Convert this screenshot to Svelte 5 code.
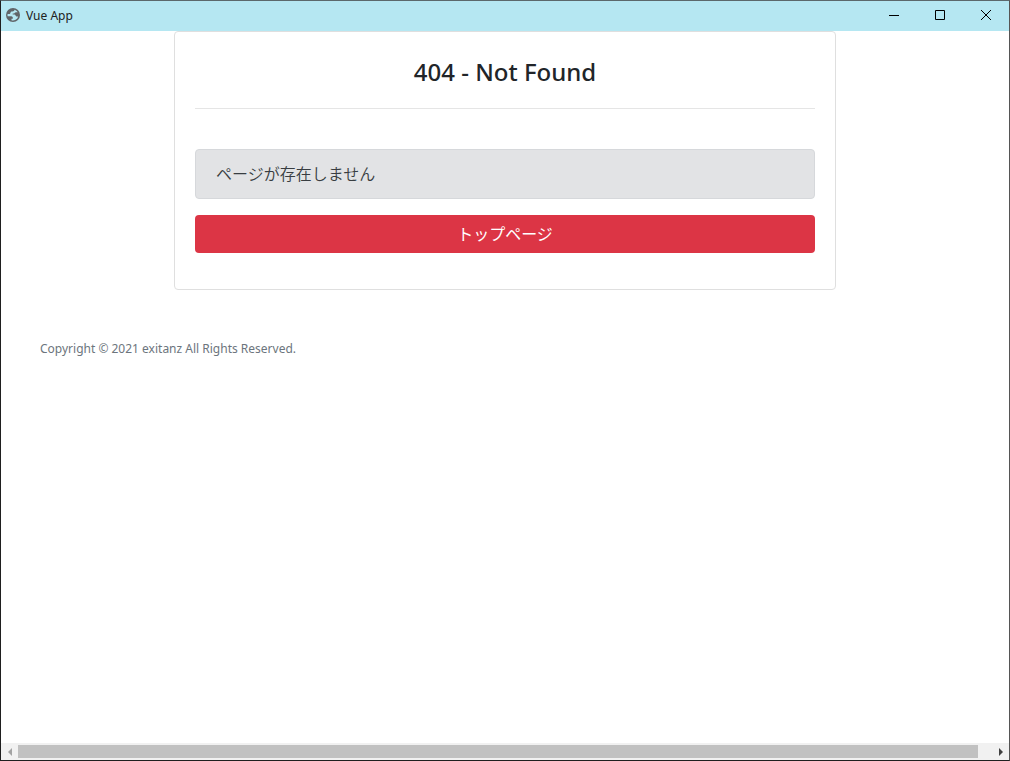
<script>
  let scroller;
  const scroll = (amount) => scroller.scrollBy({ left: amount });
</script>

<div class="window">
  <header class="titlebar">
    <svg class="logo" viewBox="0 0 14 14" aria-hidden="true">
      <circle cx="7" cy="7" r="7" fill="#606468" />
      <path
        d="M8.500 1.700C10 2.100 11 3 11.700 4.200H9.800C9 4.200 8.800 5.400 7.900 5.400H6.700V6.600H8.500C9.600 6.600 9.600 8.400 10.400 8.400H12.200A5.500 5.500 0 0 1 5.500 12.300V10.700H6.800V9.500C6.800 8.600 5.500 8.300 4.500 8.300H1.600A5.500 5.500 0 0 1 1.600 6H3.800C4.600 6 4.300 3.900 5.400 3.600 6.500 3.300 8.500 3.400 8.500 1.700Z"
        fill="#b5e7f2"
      />
    </svg>
    <span class="title">Vue App</span>
    <div class="controls">
      <button type="button" aria-label="Minimize">
        <svg viewBox="0 0 10 10"><path d="M0 5.5h10" /></svg>
      </button>
      <button type="button" aria-label="Maximize">
        <svg viewBox="0 0 10 10"><path d="M.5.5h9v9h-9z" /></svg>
      </button>
      <button type="button" aria-label="Close">
        <svg viewBox="0 0 10 10"><path d="M0 0l10 10M10 0L0 10" /></svg>
      </button>
    </div>
  </header>

  <div class="page" bind:this={scroller}>
    <main class="card">
      <h1>404 - Not Found</h1>
      <hr />
      <p class="alert" lang="ja">ページが存在しません</p>
      <a class="button" href="#top" lang="ja">トップページ</a>
    </main>
    <footer>Copyright © 2021 exitanz All Rights Reserved.</footer>
  </div>

  <div class="scrollbar">
    <button class="arrow dim" type="button" aria-label="Scroll left" onclick={() => scroll(-40)}>
      <svg viewBox="0 0 4 8"><path d="M4 0v8L0 4z" /></svg>
    </button>
    <div class="track"><div class="thumb"></div></div>
    <button class="arrow" type="button" aria-label="Scroll right" onclick={() => scroll(40)}>
      <svg viewBox="0 0 4 8"><path d="M0 0v8l4-4z" /></svg>
    </button>
  </div>
</div>

<style>
  .window {
    box-sizing: border-box;
    display: flex;
    flex-direction: column;
    min-height: 100vh;
    border: 1px solid #1f1f1f;
    border-top-color: #5b686c;
    border-right-color: #555;
    background: #fff;
    color: #212529;
    font-family: "Noto Sans", "Noto Sans CJK JP", sans-serif;
    font-size: 16px;
    line-height: 24px;
  }

  button {
    display: flex;
    align-items: center;
    justify-content: center;
    margin: 0;
    padding: 0;
    border: 0;
    background: none;
  }

  .titlebar {
    display: flex;
    align-items: center;
    height: 30px;
    padding-left: 5px;
    background: #b5e7f2;
  }

  .logo {
    width: 14px;
    height: 14px;
    margin-bottom: 2px;
  }

  .title {
    margin-left: 6px;
    color: #222;
    font-size: 12px;
  }

  .controls {
    display: flex;
    align-self: flex-start;
    margin-left: auto;
  }

  .controls button {
    width: 46px;
    height: 28px;
  }

  .controls svg {
    width: 10px;
    height: 10px;
    fill: none;
    stroke: #000;
  }

  .page {
    flex: 1;
    overflow: hidden;
  }

  .card {
    box-sizing: border-box;
    max-width: 662px;
    margin: 0 auto;
    padding: 24px 20px 36px;
    border: 1px solid #dfdfdf;
    border-radius: 4px;
  }

  h1 {
    margin: 0;
    font-size: 24px;
    font-weight: 500;
    line-height: 32px;
    text-align: center;
  }

  hr {
    margin: 20px 0 40px;
    border: 0;
    border-top: 1px solid #e5e5e5;
  }

  .alert {
    margin: 0 0 16px;
    padding: 12px 20px;
    border: 1px solid #d6d8db;
    border-radius: 4px;
    background: #e2e3e5;
    color: #383d41;
    font-weight: 350;
  }

  .button {
    display: block;
    padding: 7px 12px;
    border-radius: 4px;
    background: #dc3545;
    color: #fff;
    text-align: center;
    text-decoration: none;
  }

  footer {
    padding: 47px 39px;
    color: #6c757d;
    font-size: 12px;
  }

  .scrollbar {
    display: flex;
    height: 17px;
    background: #f1f1f1;
  }

  .arrow {
    width: 17px;
    fill: #404040;
  }

  .arrow.dim {
    fill: #a3a3a3;
  }

  .arrow svg {
    width: 4px;
    height: 8px;
  }

  .track {
    flex: 1;
    padding: 2px 0;
  }

  .thumb {
    width: 98.6%;
    height: 13px;
    background: #c1c1c1;
  }
</style>
